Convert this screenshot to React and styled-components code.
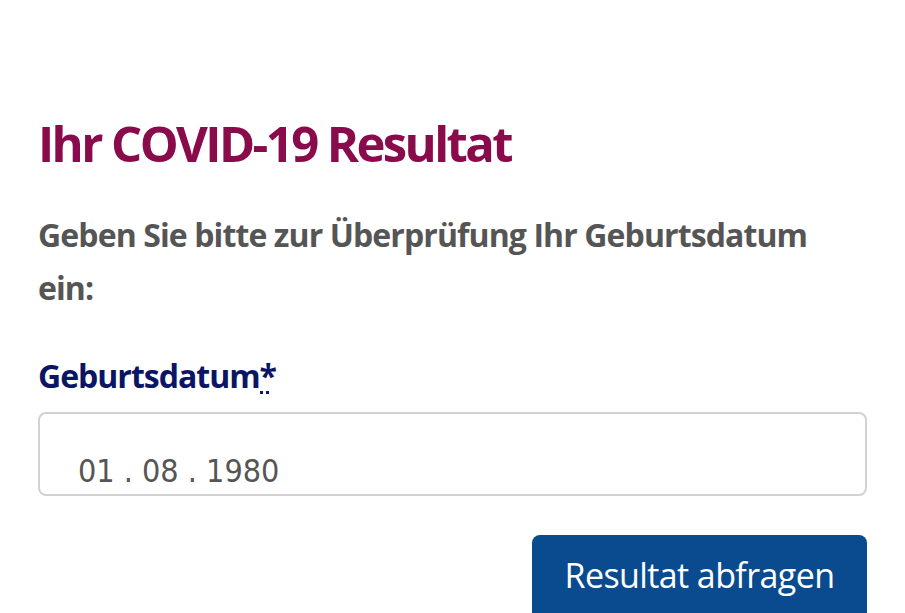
import styled, { createGlobalStyle } from "styled-components";

const GlobalStyle = createGlobalStyle`
    body {
        margin: 0;
        background: #fff;
        font-family: "Open Sans", "Noto Sans", sans-serif;
    }
`;

const Page = styled.div`
    padding: 108px 38px 0 38px;
    width: 829px;
`;

const Title = styled.h1`
    margin: 0;
    color: #8a0b4b;
    font-size: 49px;
    font-weight: 700;
    line-height: 70px;
    letter-spacing: -2.6px;
`;

const Intro = styled.p`
    margin: 30px 0 0 0;
    color: #555;
    font-size: 32px;
    font-weight: 700;
    line-height: 53px;
    letter-spacing: -0.9px;
`;

const Label = styled.label`
    display: block;
    margin-top: 40px;
    color: #0b1566;
    font-size: 32px;
    font-weight: 700;
    line-height: 44px;
    letter-spacing: -1px;
`;

const Required = styled.abbr`
    display: inline-block;
    line-height: 30px;
    text-decoration: none;
    border-bottom: 3px dotted #0b1566;
    width: 9px;
`;

const DateField = styled.div`
    margin-top: 14px;
    height: 84px;
    border: 2px solid #d2d2d2;
    border-radius: 8px;
    display: flex;
    align-items: flex-end;
    padding: 0 0 4px 38px;
    box-sizing: border-box;
    color: #555;
    font-family: "DejaVu Sans Condensed", "Roboto", sans-serif;
    font-size: 32px;
`;

const Actions = styled.div`
    display: flex;
    justify-content: flex-end;
    margin-top: 39px;
`;

const Button = styled.button`
    width: 335px;
    height: 90px;
    padding: 0 0 10px 0;
    background: #0a4b8f;
    color: #fff;
    border: none;
    border-radius: 8px;
    font-family: "Open Sans", sans-serif;
    font-size: 34px;
    letter-spacing: -0.6px;
    line-height: 46px;
`;

export default function App() {
    return (
        <Page>
            <GlobalStyle />
            <Title>Ihr COVID-19 Resultat</Title>
            <Intro>Geben Sie bitte zur Überprüfung Ihr Geburtsdatum ein:</Intro>
            <Label>
                Geburtsdatum<Required title="Pflichtfeld">*</Required>
            </Label>
            <DateField>01 . 08 . 1980</DateField>
            <Actions>
                <Button>Resultat abfragen</Button>
            </Actions>
        </Page>
    );
}
